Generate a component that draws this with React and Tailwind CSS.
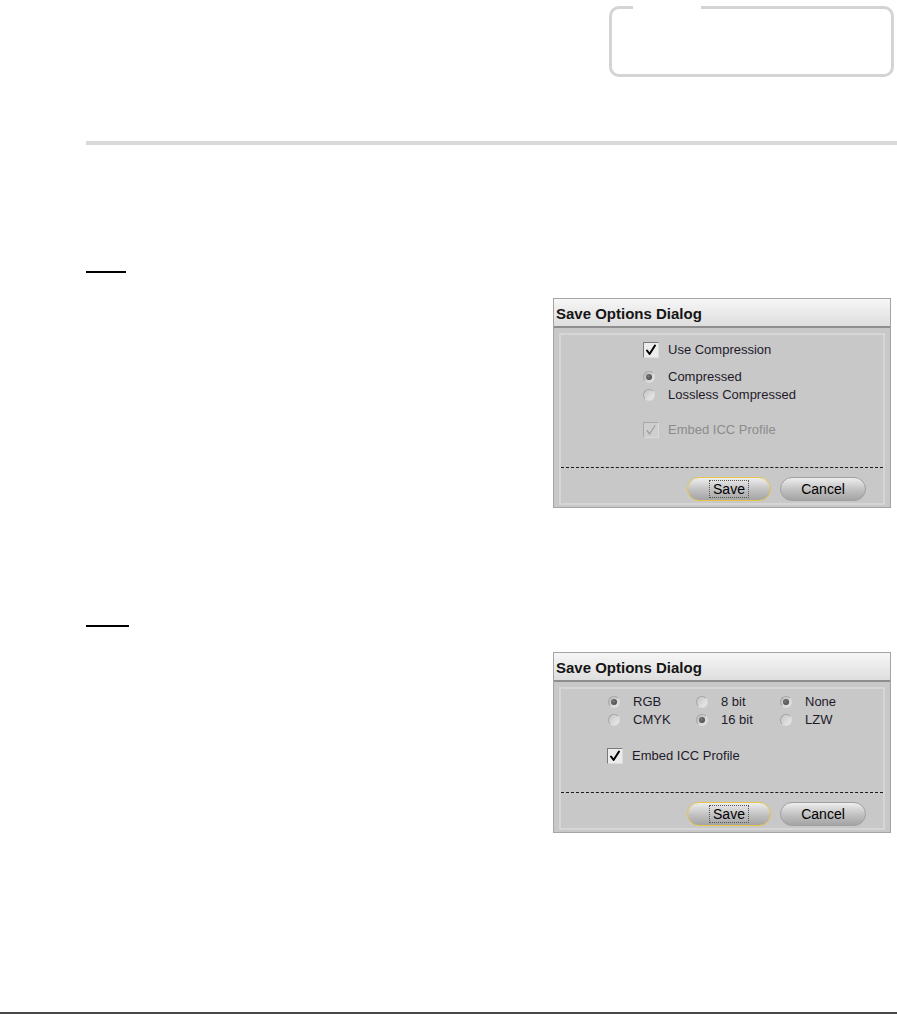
import React from 'react';

const font = { fontFamily: '"Liberation Sans", Arial, sans-serif' };

function Check({ disabled }) {
  return (
    <div
      className={`w-[16px] h-[16px] flex items-center justify-center border-t border-l border-b border-r ${
        disabled
          ? 'bg-[#cfcfcf] border-t-[#a8a8a8] border-l-[#a8a8a8] border-b-[#dadada] border-r-[#dadada]'
          : 'bg-[#ececec] border-t-[#7a7a7a] border-l-[#7a7a7a] border-b-[#dcdcdc] border-r-[#dcdcdc]'
      }`}
    >
      <svg width="12" height="12" viewBox="0 0 12 12">
        <path
          d="M2 6.5 L4.6 10 L10 1.5"
          fill="none"
          stroke={disabled ? '#a0a0a0' : '#000'}
          strokeWidth={disabled ? 1.3 : 2}
          strokeLinecap="round"
          strokeLinejoin="round"
        />
      </svg>
    </div>
  );
}

function Radio({ on }) {
  return (
    <div
      className={`w-[12px] h-[12px] rounded-full border border-t-[#a6a6a6] border-l-[#a6a6a6] border-b-[#dcdcdc] border-r-[#dcdcdc] flex items-center justify-center ${
        on
          ? 'bg-[linear-gradient(135deg,#bcbcbc,#e6e6e6)]'
          : 'bg-[linear-gradient(135deg,#c4c4c4,#ececec)]'
      }`}
    >
      {on && <div className="w-[6px] h-[6px] rounded-full bg-[radial-gradient(circle_at_40%_40%,#7a7a7a,#3a3a3a)]" />}
    </div>
  );
}

function Option({ type, on, disabled, label }) {
  return (
    <div className="flex items-center h-[16px]">
      <div className="w-[25px] flex">
        {type === 'radio' ? <Radio on={on} /> : <Check disabled={disabled} />}
      </div>
      <span className={`text-[13px] leading-[16px] ${disabled ? 'text-[#8c8c8c]' : 'text-[#1e1a2a]'}`}>
        {label}
      </span>
    </div>
  );
}

function Buttons() {
  return (
    <div className="flex justify-end gap-[9px] pr-[17px]">
      <button className="w-[84px] h-[24px] rounded-full border border-[#e6c54a] bg-[linear-gradient(#eeeeee,#c0c0c0_55%,#a4a4a4)] flex items-center justify-center">
        <span className="text-[14px] leading-[16px] text-black border border-dotted border-[#555] px-[3px]">Save</span>
      </button>
      <button className="w-[86px] h-[24px] rounded-full border border-[#a0a0a0] bg-[linear-gradient(#eeeeee,#c0c0c0_55%,#a4a4a4)] flex items-center justify-center">
        <span className="text-[14px] leading-[16px] text-black">Cancel</span>
      </button>
    </div>
  );
}

function Dialog({ children, pt }) {
  return (
    <div className="ml-[553px] w-[338px] border border-[#a4a4a4] bg-[#c8c8c8]" style={font}>
      <div className="h-[29px] bg-[linear-gradient(#f6f6f6,#dedede)] border-b-2 border-[#8e8e8e] flex items-center pl-[2px] pt-[4px]">
        <span className="text-[15px] font-bold text-[#151515]">Save Options Dialog</span>
      </div>
      <div className="px-[5px] pt-[5px] pb-[2px]">
        <div className={`border-2 border-[#d6d6d6] pb-[2px] ${pt}`}>{children}</div>
      </div>
    </div>
  );
}

export default function App() {
  return (
    <div className="w-full h-[1014px] bg-white flex flex-col overflow-hidden" style={font}>
      {/* empty framed box at top right */}
      <fieldset className="mt-[6px] ml-[609px] w-[285px] h-[71px] border-[3px] border-[#d4d4d4] rounded-[10px]">
        <legend className="ml-[21px] w-[68px] text-[1px] leading-[1px]">&nbsp;</legend>
      </fieldset>

      <div className="mt-[64px] ml-[86px] h-[4px] bg-[#d9d9d9]" />

      <div className="mt-[126px] ml-[86px] w-[40px] h-[2px] bg-black" />

      <div className="mt-[25px]">
        <Dialog pt="pt-[7px]">
          <div className="pl-[82px]">
            <Option type="check" label="Use Compression" />
            <div className="mt-[11px]">
              <Option type="radio" on label="Compressed" />
            </div>
            <div className="mt-[2px]">
              <Option type="radio" label="Lossless Compressed" />
            </div>
            <div className="mt-[19px]">
              <Option type="check" disabled label="Embed ICC Profile" />
            </div>
          </div>
          <div className="mt-[29px] border-t border-dashed border-[#1a1a1a]" />
          <div className="mt-[9px]">
            <Buttons />
          </div>
        </Dialog>
      </div>

      <div className="mt-[117px] ml-[86px] w-[43px] h-[2px] bg-black" />

      <div className="mt-[25px]">
        <Dialog pt="pt-[5px]">
          <div className="pl-[47px] grid grid-cols-[88px_84px_88px] gap-y-[2px]">
            <Option type="radio" on label="RGB" />
            <Option type="radio" label="8 bit" />
            <Option type="radio" on label="None" />
            <Option type="radio" label="CMYK" />
            <Option type="radio" on label="16 bit" />
            <Option type="radio" label="LZW" />
          </div>
          <div className="pl-[46px] mt-[20px]">
            <Option type="check" label="Embed ICC Profile" />
          </div>
          <div className="mt-[28px] border-t border-dashed border-[#1a1a1a]" />
          <div className="mt-[9px]">
            <Buttons />
          </div>
        </Dialog>
      </div>

      <div className="mt-auto h-[2px] bg-[#474747]" />
    </div>
  );
}
